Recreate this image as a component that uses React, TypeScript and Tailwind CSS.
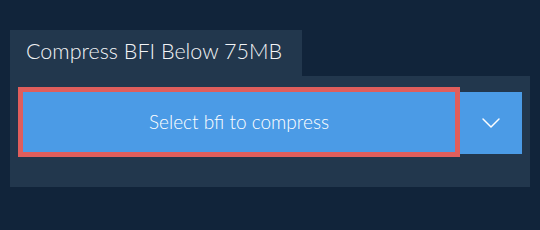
import { ChevronDown } from "lucide-react"

export default function App() {
  return (
    <div className="w-[540px] h-[230px] bg-[#11243a] pt-[30px] px-[10px] font-['Lato',sans-serif]">
      {/* tab */}
      <div className="w-[292px] h-[46px] bg-[#22374d] pl-4 pt-[7px] text-[21.5px] font-light text-[#f2f4f6] leading-[28px]">
        Compress BFI Below 75MB
      </div>

      {/* panel */}
      <div className="w-[520px] h-[111px] bg-[#22374d] pt-4 pl-[13px] pr-2 flex items-start">
        <button
          type="button"
          className="w-[432px] h-[60px] bg-[#4b9be6] text-white text-[19px] font-light outline-[5px] outline-solid outline-[#e05e5c]"
        >
          Select bfi to compress
        </button>
        <button
          type="button"
          className="ml-[5px] w-[62px] h-[62px] bg-[#4b9be6] flex items-center justify-center text-white"
        >
          <ChevronDown className="w-8 h-8" strokeWidth={1.1} />
        </button>
      </div>
    </div>
  )
}
